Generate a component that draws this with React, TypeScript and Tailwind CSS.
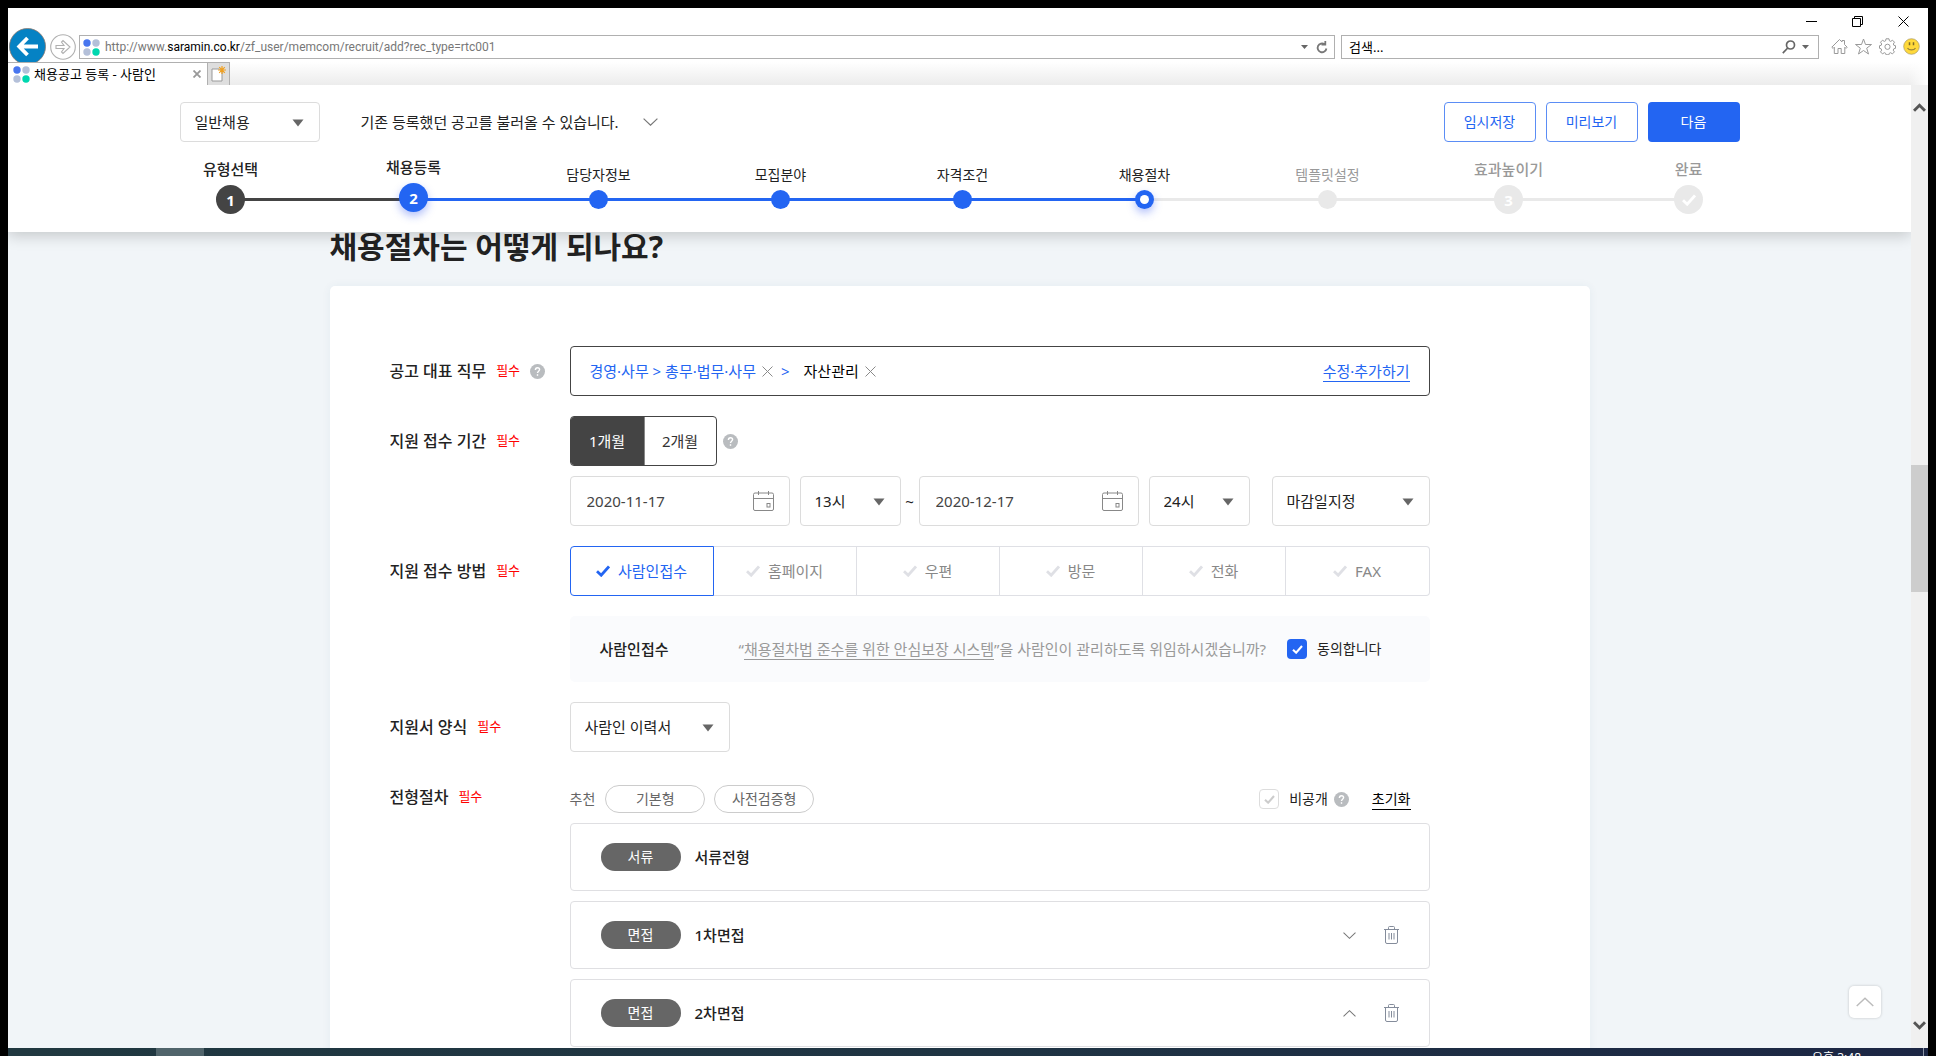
import React from "react";

type Tone = "dark" | "blue" | "gray";

const FONT = "font-['Noto_Sans','Noto_Sans_CJK_KR',sans-serif]";

function Caret({ className = "" }: { className?: string }) {
  return (
    <svg viewBox="0 0 12 8" className={`pointer-events-none h-2 w-3 ${className}`} aria-hidden="true">
      <path d="M0.5 0.5h11L6 7.5z" fill="#666" />
    </svg>
  );
}

function Favicon() {
  return (
    <svg viewBox="0 0 17 17" className="size-[17px] shrink-0" aria-hidden="true">
      <circle cx="4" cy="4" r="3.7" fill="#4876ef" />
      <circle cx="13" cy="4" r="3.7" fill="#b4c0d9" />
      <circle cx="4" cy="13" r="3.7" fill="#b4c0d9" />
      <circle cx="13" cy="13" r="3.7" fill="#00d7af" />
    </svg>
  );
}

function Check({ className = "" }: { className?: string }) {
  return (
    <svg viewBox="0 0 14 12" className={className} fill="none" stroke="currentColor" strokeWidth="2.8" aria-hidden="true">
      <path d="M1 6.2 5.2 10.2 13 1.4" />
    </svg>
  );
}

function Help() {
  return (
    <button type="button" aria-label="도움말" className="flex size-[15px] shrink-0 items-center justify-center rounded-full bg-[#b9bcbf]">
      <svg viewBox="0 0 15 15" className="size-[15px]" fill="none" stroke="#fff" strokeWidth="1.4" aria-hidden="true">
        <path d="M5.4 5.9c0-1.4.9-2.2 2.1-2.2s2.1.8 2.1 1.9c0 1.6-2.1 1.7-2.1 3.4" />
        <path d="M7.5 10.2v1.6" />
      </svg>
    </button>
  );
}

function Cross() {
  return (
    <button type="button" aria-label="삭제" className="shrink-0">
      <svg viewBox="0 0 11 11" className="size-[11px]" stroke="#8a8a8a" fill="none" aria-hidden="true">
        <path d="M.5.5l10 10M10.5.5l-10 10" />
      </svg>
    </button>
  );
}

function Chevron({ up = false, className = "h-[7px] w-[13px]", stroke = "#777" }: { up?: boolean; className?: string; stroke?: string }) {
  return (
    <svg viewBox="0 0 15 8" className={className} fill="none" stroke={stroke} strokeWidth="1.2" aria-hidden="true">
      <path d={up ? "M.6 7.4 7.5.8l6.9 6.6" : "M.6.6l6.9 6.6L14.4.6"} />
    </svg>
  );
}

function Trash() {
  return (
    <svg viewBox="0 0 15 18" className="h-[18px] w-[15px]" fill="none" stroke="#848c9b" aria-hidden="true">
      <path d="M0 3.5h15M4.5 3V1.5q0-1 1-1h4q1 0 1 1V3M1.500 4v12q0 1.500 1.500 1.500h9q1.500 0 1.500-1.500V4M5 7v6.500M7.500 7v6.500M10 7v6.500" />
    </svg>
  );
}

function CalendarIcon() {
  return (
    <svg viewBox="0 0 21 20" className="h-5 w-[21px]" fill="none" stroke="#888" aria-hidden="true">
      <rect x=".5" y="2" width="20" height="17.500" rx="1.500" />
      <path d="M1 7.500h19M5.500 0v4M15.500 0v4" />
      <rect x="14" y="12.500" width="3" height="3.500" />
    </svg>
  );
}

function Select({ label, value, className }: { label: string; value: string; className: string }) {
  return (
    <div className={`relative ${className}`}>
      <select aria-label={label} className="size-full appearance-none rounded-[4px] border border-[#dcdcdc] bg-white px-3.5 text-[15px] leading-5 text-[#222]">
        <option>{value}</option>
      </select>
      <Caret className="absolute top-1/2 right-4 -mt-[3px]" />
    </div>
  );
}

function DateField({ label, value }: { label: string; value: string }) {
  return (
    <div className="flex h-[50px] w-[220px] items-center justify-between rounded-[4px] border border-[#dcdcdc] bg-white pr-[15px] pl-4">
      <input aria-label={label} defaultValue={value} className="w-32 text-[15px] leading-5 text-[#444] outline-none" />
      <button type="button" aria-label="날짜 선택">
        <CalendarIcon />
      </button>
    </div>
  );
}

function Row({ label, help, children }: { label: string; help?: boolean; children: React.ReactNode }) {
  return (
    <div className="flex">
      <div className="flex h-[50px] w-[180px] shrink-0 items-center">
        <span className="text-base leading-6 font-medium text-[#222]">{label}</span>
        <span className="mb-0.5 ml-2.5 text-[13px] leading-5 text-[#ff0000]">필수</span>
        {help && (
          <span className="ml-2.5">
            <Help />
          </span>
        )}
      </div>
      <div className="min-w-0 flex-1">{children}</div>
    </div>
  );
}

const steps: { label: string; kind: "big" | "dot" | "ring"; mark?: string; tone: Tone; line?: Tone; active?: boolean }[] = [
  { label: "유형선택", kind: "big", mark: "1", tone: "dark", line: "dark" },
  { label: "채용등록", kind: "big", mark: "2", tone: "blue", line: "blue", active: true },
  { label: "담당자정보", kind: "dot", tone: "blue", line: "blue" },
  { label: "모집분야", kind: "dot", tone: "blue", line: "blue" },
  { label: "자격조건", kind: "dot", tone: "blue", line: "blue" },
  { label: "채용절차", kind: "ring", tone: "blue", line: "gray" },
  { label: "템플릿설정", kind: "dot", tone: "gray", line: "gray" },
  { label: "효과높이기", kind: "big", mark: "3", tone: "gray", line: "gray" },
  { label: "완료", kind: "big", mark: "check", tone: "gray" },
];

const toneBg: Record<Tone, string> = { dark: "bg-[#444]", blue: "bg-[#2365f2]", gray: "bg-[#e9e9e9]" };

function Stepper() {
  return (
    <ol className="mt-[15px] mr-[51px] ml-[51px] grid grid-cols-[183fr_185fr_182fr_182fr_182fr_183fr_181fr_180fr_0fr]">
      {steps.map((s) => (
        <li key={s.label} className="min-w-0">
          <div
            className={`flex h-7 w-0 items-end justify-center whitespace-nowrap leading-5 ${
              s.kind === "big" ? "text-[15px] font-medium" : "text-sm"
            } ${s.active ? "pb-2" : s.kind === "big" ? "pb-1.5" : ""} ${s.tone === "gray" ? "text-[#999]" : "text-[#222]"}`}
          >
            {s.label}
          </div>
          <div className="flex h-[29px] items-center">
            <div className="z-10 flex w-0 justify-center">
              {s.kind === "big" ? (
                <span
                  className={`flex size-[29px] shrink-0 items-center justify-center rounded-full text-[15px] leading-5 font-bold text-white ${toneBg[s.tone]} ${
                    s.active ? "mb-1 shadow-[0_4px_8px_rgba(35,75,242,0.35)]" : ""
                  }`}
                >
                  {s.mark === "check" ? <Check className="h-3 w-3.5" /> : s.mark}
                </span>
              ) : (
                <span
                  className={`flex size-[19px] shrink-0 items-center justify-center rounded-full ${toneBg[s.tone]} ${
                    s.kind === "ring" ? "shadow-[0_4px_8px_rgba(35,75,242,0.35)]" : ""
                  }`}
                >
                  {s.kind === "ring" && <span className="size-[9px] rounded-full bg-white" />}
                </span>
              )}
            </div>
            {s.line && <div className={`h-[3px] flex-1 ${toneBg[s.line]}`} />}
          </div>
        </li>
      ))}
    </ol>
  );
}

function BrowserChrome() {
  return (
    <header className="shrink-0 bg-white">
      <div className="flex h-[27px] items-center justify-end gap-[35px] pr-[19px]">
        <button type="button" aria-label="최소화">
          <svg viewBox="0 0 11 11" className="size-[11px]" stroke="#000" fill="none"><path d="M0 5.500h11" /></svg>
        </button>
        <button type="button" aria-label="이전 크기로 복원">
          <svg viewBox="0 0 11 11" className="size-[11px]" stroke="#000" fill="none"><path d="M.5 2.500h8v8h-8zM2.500 2.500v-2h8v8h-2" /></svg>
        </button>
        <button type="button" aria-label="닫기">
          <svg viewBox="0 0 11 11" className="size-[11px]" stroke="#000" fill="none"><path d="M.5.5l10 10M10.500.5l-10 10" /></svg>
        </button>
      </div>
      <div className="flex h-[27px] items-start pr-2 pl-px">
        <button type="button" aria-label="뒤로" className="-mt-[7px] h-[34px] w-[37px] shrink-0 overflow-hidden">
          <svg viewBox="0 0 37 34" className="h-[34px] w-[37px]">
            <circle cx="18.500" cy="18.500" r="18" fill="#0582c4" stroke="#8b7a70" strokeWidth=".8" />
            <path d="M29 18.500H11M18.500 10l-8.300 8.500 8.300 8.500" fill="none" stroke="#fff" strokeWidth="3.800" />
          </svg>
        </button>
        <button type="button" aria-label="앞으로" className="-mt-px ml-1 shrink-0">
          <svg viewBox="0 0 26 26" className="size-[26px]" fill="#fff" stroke="#b0b0b0" strokeWidth="1.100">
            <circle cx="13" cy="13" r="12.300" />
            <path d="M6 11.500h8L11.500 8 13 6.500l7 6.500-7 6.500-1.500-1.500 2.500-3.500H6z" />
          </svg>
        </button>
        <div className="ml-[3px] flex h-6 min-w-0 flex-1 items-center border border-[#b0b0b0] pr-1.5 pl-[3px]">
          <Favicon />
          <div className="ml-[5px] flex-1 font-['Roboto','Noto_Sans_CJK_KR',sans-serif] text-xs leading-5 text-[#777]">
            http://www.<span className="text-black">saramin.co.kr</span>/zf_user/memcom/recruit/add?rec_type=rtc001
          </div>
          <button type="button" aria-label="주소 목록"><svg viewBox="0 0 7 4" className="h-1 w-[7px]"><path d="M0 0h7L3.500 4z" fill="#666" /></svg></button>
          <button type="button" aria-label="새로 고침" className="ml-2">
            <svg viewBox="0 0 12 13" className="h-[13px] w-3" fill="none" stroke="#777" strokeWidth="1.800">
              <path d="M8.500 3.200A4.400 4.400 0 1 0 10.400 7.500M5.500 3.600h3.800V0" />
            </svg>
          </button>
        </div>
        <div className="ml-1.5 flex h-6 w-[478px] items-center border border-[#b0b0b0] pr-[9px] pl-[7px]">
          <input aria-label="검색" placeholder="검색..." className="min-w-0 flex-1 text-[13px] leading-5 outline-none placeholder:text-black" />
          <button type="button" aria-label="검색 실행">
            <svg viewBox="0 0 14 14" className="size-3.5" fill="none" stroke="#666" strokeWidth="1.700">
              <circle cx="8.500" cy="5" r="4" />
              <path d="M5.700 8 .8 13.200" />
            </svg>
          </button>
          <button type="button" aria-label="검색 공급자" className="ml-1.5"><svg viewBox="0 0 7 4" className="h-1 w-[7px]"><path d="M0 0h7L3.500 4z" fill="#666" /></svg></button>
        </div>
        <div className="ml-3 flex gap-[7px] pt-[3px]">
          <button type="button" aria-label="홈">
            <svg viewBox="0 0 17 17" className="size-[17px]" fill="none" stroke="#999">
              <path d="M.8 9.200 8.500 1.500l2.500 2.500V2.500h2.500v4l2.700 2.700-1.200 1.200-1.200-1.200v6.300h-3.600v-5H7v5H3.300V9.200l-1.200 1.200z" />
            </svg>
          </button>
          <button type="button" aria-label="즐겨찾기">
            <svg viewBox="0 0 17 17" className="size-[17px]" fill="none" stroke="#999"><path d="m8.500 1 2 5.500h6l-4.800 3.700 1.800 5.800-5-3.500-5 3.500 1.800-5.800L.5 6.500h6z" /></svg>
          </button>
          <button type="button" aria-label="도구">
            <svg viewBox="0 0 17 17" className="size-[17px]" fill="none" stroke="#999">
              <path d="M7 .8h3l.4 2 1.300.6 1.800-1.200 2 2-1.200 1.800.6 1.300 1.600.4v2.600l-1.700.5-.6 1.300 1.200 1.800-2 2-1.800-1.200-1.300.6-.4 1.500H7l-.4-1.500-1.300-.6-1.800 1.200-2-2 1.200-1.800-.6-1.300L.5 10.300V7.700l1.700-.4.500-1.300-1.200-1.800 2-2 1.800 1.200 1.300-.6z" />
              <circle cx="8.500" cy="8.800" r="2.600" />
            </svg>
          </button>
          <button type="button" aria-label="의견 보내기">
            <svg viewBox="0 0 17 17" className="size-[17px]">
              <circle cx="8.500" cy="8.500" r="7.800" fill="#ffd93b" stroke="#a79a66" strokeWidth=".7" />
              <path d="M6.500 4.300v3M10.500 4.300v3" fill="none" stroke="#7d6a2a" strokeWidth="1.500" />
              <path d="M4.500 10c1.500 2.600 6.500 2.600 8 0" fill="none" stroke="#9a8438" strokeWidth="1.200" />
            </svg>
          </button>
        </div>
      </div>
      <div className="flex h-[23px] bg-linear-to-b from-white to-[#ececec]">
        <div className="flex w-[199px] items-center border-t border-[#b0b0b0] bg-white pr-1.5 pl-[5px]">
          <Favicon />
          <span className="ml-1 flex-1 text-[13px] leading-5 text-black">채용공고 등록 - 사람인</span>
          <button type="button" aria-label="탭 닫기">
            <svg viewBox="0 0 8 8" className="size-2" stroke="#999" strokeWidth="1.800"><path d="M.5.5l7 7M7.500.5l-7 7" /></svg>
          </button>
        </div>
        <button type="button" aria-label="새 탭" className="flex w-[23px] items-center justify-center border border-b-0 border-[#b0b0b0] bg-[#dedede]">
          <svg viewBox="0 0 15 16" className="h-4 w-[15px]">
            <path d="M1 3h7.500l2.500 2.500V15H1z" fill="#fff" stroke="#999" />
            <path d="M11 0v8M7 4h8M8.200 1.200l5.600 5.600M13.800 1.200 8.200 6.800" stroke="#f0a020" strokeWidth="1.200" />
          </svg>
        </button>
        <div className="ml-auto w-5 bg-linear-to-r from-transparent to-white" />
      </div>
    </header>
  );
}

function TopBar() {
  return (
    <div className="relative z-20 shrink-0 bg-white pb-[18px] shadow-[0_4px_14px_rgba(0,0,0,0.18)]">
      <div className="mx-auto max-w-[1560px] pt-[17px]">
        <div className="flex items-center">
          <Select label="채용 유형" value="일반채용" className="h-10 w-[140px]" />
          <button type="button" className="ml-[41px] flex items-center gap-6 text-[15px] leading-5 text-[#222]">
            기존 등록했던 공고를 불러올 수 있습니다.
            <Chevron className="h-2 w-[15px]" />
          </button>
          <div className="ml-auto flex gap-2.5 text-sm">
            <button type="button" className="h-10 w-[92px] rounded-[4px] border border-[#5b8df5] text-[#2365f2]">임시저장</button>
            <button type="button" className="h-10 w-[92px] rounded-[4px] border border-[#5b8df5] text-[#2365f2]">미리보기</button>
            <button type="button" className="h-10 w-[92px] rounded-[4px] bg-[#2365f2] text-white">다음</button>
          </div>
        </div>
        <Stepper />
      </div>
    </div>
  );
}

const methods = ["사람인접수", "홈페이지", "우편", "방문", "전화", "FAX"];
const stages = [
  { type: "서류", name: "서류전형" },
  { type: "면접", name: "1차면접", toggle: "down" },
  { type: "면접", name: "2차면접", toggle: "up" },
];

function RecruitForm() {
  return (
    <form className="rounded-[5px] bg-white px-[60px] pt-[60px] pb-16 shadow-[0_0_10px_rgba(40,80,120,0.06)]">
      <div className="flex max-w-[1040px] flex-col gap-5">
        <Row label="공고 대표 직무" help>
          <div className="flex h-[50px] items-center rounded-[4px] border border-[#444] px-[19px] text-[15px] leading-5">
            <span className="text-[#2365f2]">경영·사무 &gt; 총무·법무·사무</span>
            <span className="ml-1.5 flex"><Cross /></span>
            <span className="ml-2 text-[#2365f2]">&gt;</span>
            <span className="ml-3.5 text-black">자산관리</span>
            <span className="ml-1.5 flex"><Cross /></span>
            <a href="#jobs" className="ml-auto border-b border-[#2365f2] text-[#2365f2]">수정·추가하기</a>
          </div>
        </Row>
        <Row label="지원 접수 기간">
          <div className="flex items-center">
            <div className="flex h-[50px] overflow-hidden rounded-[4px] border border-[#444] text-[15px]">
              <button type="button" className="w-[74px] border-r border-[#888] bg-[#444] text-white">1개월</button>
              <button type="button" className="w-[71px] text-[#333]">2개월</button>
            </div>
            <span className="ml-1.5 flex"><Help /></span>
          </div>
          <div className="mt-2.5 flex items-center">
            <DateField label="접수 시작일" value="2020-11-17" />
            <Select label="시작 시간" value="13시" className="ml-2.5 h-[50px] w-[101px]" />
            <span className="w-[18px] text-center text-[15px] leading-5 text-[#222]">~</span>
            <DateField label="접수 마감일" value="2020-12-17" />
            <Select label="마감 시간" value="24시" className="ml-2.5 h-[50px] w-[101px]" />
            <Select label="마감 방식" value="마감일지정" className="ml-auto h-[50px] w-[158px]" />
          </div>
        </Row>
        <Row label="지원 접수 방법">
          <div className="grid h-[50px] grid-cols-[144fr_143fr_143fr_143fr_143fr_144fr]">
            {methods.map((m, i) => (
              <label
                key={m}
                className={`flex items-center justify-center gap-2 border text-[15px] leading-5 ${
                  i === 0 ? "rounded-l-[4px] border-[#2365f2] text-[#2365f2]" : "border-l-0 border-[#dfe0e5] text-[#888]"
                } ${i === methods.length - 1 ? "rounded-r-[4px]" : ""}`}
              >
                <input type="checkbox" defaultChecked={i === 0} className="sr-only" />
                <Check className={`h-3 w-3.5 ${i === 0 ? "text-[#2365f2]" : "text-[#dfe0e5]"}`} />
                {m}
              </label>
            ))}
          </div>
          <div className="mt-5 flex h-[66px] items-center rounded-[5px] bg-[#fafbfd] pr-12 pl-[30px] text-[15px] leading-5">
            <span className="font-medium text-[#222]">사람인접수</span>
            <span className="ml-auto text-[#999]">
              “<a href="#system" className="border-b border-[#999]">채용절차법 준수를 위한 안심보장 시스템</a>”을 사람인이 관리하도록 위임하시겠습니까?
            </span>
            <label className="ml-[21px] flex items-center gap-2.5 text-sm text-[#222]">
              <input type="checkbox" defaultChecked className="sr-only" />
              <span className="flex size-5 items-center justify-center rounded-[4px] bg-[#2365f2] text-white">
                <Check className="h-[9px] w-[11px]" />
              </span>
              동의합니다
            </label>
          </div>
        </Row>
        <Row label="지원서 양식">
          <Select label="지원서 양식" value="사람인 이력서" className="h-[50px] w-40" />
        </Row>
        <Row label="전형절차">
          <div className="flex items-center pt-[13px] pb-2.5 text-sm leading-5 text-[#666]">
            <span>추천</span>
            <button type="button" className="ml-2.5 h-7 w-[100px] shrink-0 rounded-full border border-[#ccc]">기본형</button>
            <button type="button" className="ml-[9px] h-7 w-[100px] shrink-0 rounded-full border border-[#ccc]">사전검증형</button>
            <div className="ml-auto flex h-7 items-center pr-[19px]">
              <label className="flex items-center gap-2.5 text-[#222]">
                <input type="checkbox" className="sr-only" />
                <span className="flex size-5 items-center justify-center rounded-[4px] border border-[#ddd] text-[#ccc]">
                  <Check className="h-[9px] w-[11px]" />
                </span>
                비공개
              </label>
              <span className="ml-1.5 flex"><Help /></span>
              <button type="button" className="ml-[23px] border-b border-black text-black">초기화</button>
            </div>
          </div>
          <ul className="flex flex-col gap-2.5">
            {stages.map((s) => (
              <li key={s.name} className="flex h-[68px] items-center rounded-[4px] border border-[#dfdfe2] px-[30px]">
                <span className="flex h-7 w-20 items-center justify-center rounded-full bg-[#666] text-sm leading-5 text-white">{s.type}</span>
                <span className="ml-3.5 text-[15px] leading-5 font-medium text-[#222]">{s.name}</span>
                {s.toggle && (
                  <div className="ml-auto flex items-center gap-7">
                    <button type="button" aria-label="펼치기">
                      <Chevron up={s.toggle === "up"} />
                    </button>
                    <button type="button" aria-label="단계 삭제">
                      <Trash />
                    </button>
                  </div>
                )}
              </li>
            ))}
          </ul>
        </Row>
      </div>
    </form>
  );
}

function Scrollbar() {
  return (
    <div className="flex w-[17px] shrink-0 flex-col items-center bg-[#f0f0f0] pt-[18px] pb-[18px]" aria-hidden="true">
      <svg viewBox="0 0 13 9" className="h-[9px] w-[13px]" fill="none" stroke="#555" strokeWidth="3"><path d="M1 7.800 6.500 2.300 12 7.800" /></svg>
      <div className="flex min-h-0 w-full flex-1 flex-col">
        <div className="flex-[353]" />
        <div className="flex-[127] bg-[#cdcdcd]" />
        <div className="flex-[429]" />
      </div>
      <svg viewBox="0 0 13 9" className="h-[9px] w-[13px]" fill="none" stroke="#555" strokeWidth="3"><path d="M1 1.200 6.500 6.700 12 1.200" /></svg>
    </div>
  );
}

export default function App() {
  return (
    <div className={`flex h-screen flex-col overflow-hidden bg-black px-2 pt-2 ${FONT}`}>
      <BrowserChrome />
      <div className="flex min-h-0 flex-1">
        <div className="relative flex min-w-0 flex-1 flex-col overflow-hidden bg-[#f1f5f8]">
          <TopBar />
          <main className="mx-auto w-full max-w-[1260px]">
            <h1 className="pb-6 text-[30px] leading-[30px] font-bold text-[#222]">채용절차는 어떻게 되나요?</h1>
            <RecruitForm />
          </main>
          <button
            type="button"
            aria-label="맨 위로"
            className="absolute right-[30px] bottom-[30px] flex size-8 items-center justify-center rounded-[5px] bg-white shadow-[0_0_3px_rgba(0,0,0,0.2)]"
          >
            <Chevron up className="h-[10px] w-[18px]" stroke="#bbb" />
          </button>
        </div>
        <Scrollbar />
      </div>
      <footer className="flex h-2 shrink-0 overflow-hidden bg-linear-to-r from-[#203840] via-[#1f3443] to-[#1c2644]">
        <div className="ml-[148px] w-12 bg-[#50646b]" />
        <time className="mt-0.5 ml-auto text-xs leading-4 whitespace-nowrap text-white">오후 3:48</time>
        <div className="mr-1 ml-[62px] w-px shrink-0 bg-[#8a93a5]" />
      </footer>
    </div>
  );
}
